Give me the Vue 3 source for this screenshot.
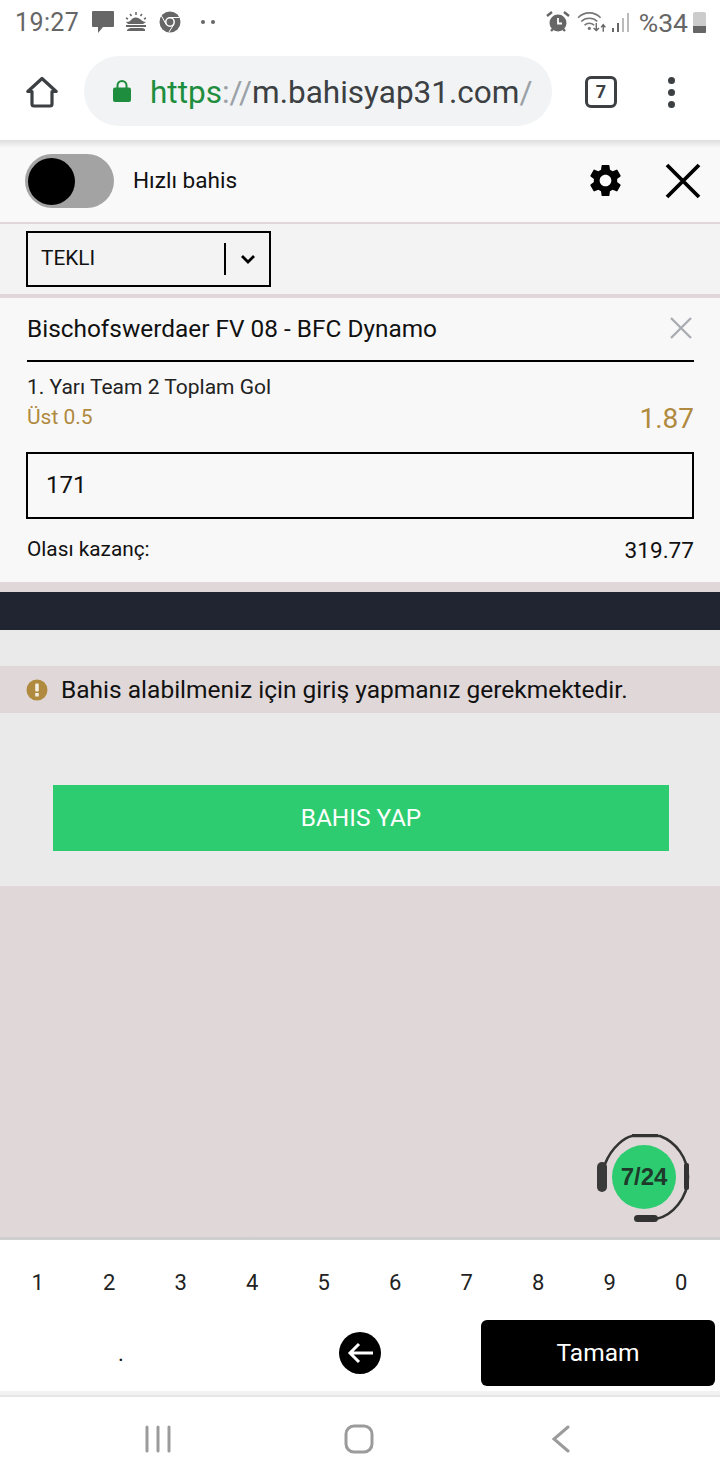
<script setup>
const digits = ['1','2','3','4','5','6','7','8','9','0']
</script>

<template>
  <div class="phone">
    <div class="status">
      <div class="status-left">
        <span class="time">19:27</span>
        <svg class="ic" width="24" height="24" viewBox="0 0 24 24"><path d="M2 1h20a1 1 0 0 1 1 1v14a1 1 0 0 1-1 1H12l-5 6v-6H2a1 1 0 0 1-1-1V2a1 1 0 0 1 1-1z" fill="#666"/></svg>
        <svg class="ic sun" width="22" height="20" viewBox="0 0 22 20"><g fill="#666"><path d="M1 10c3 0 4-1 5-2a6 6 0 0 1 9-1c2 2 4 3 6 3l-3 2H3z"/><rect x="1" y="13" width="20" height="2"/><path d="M2 18c2-2 4-2 5-2h10c2 0 3 1 3 2v1H2z"/></g><g stroke="#666" stroke-width="1.5"><path d="M11 0v3M5 2l1.500 2M17 2l-1.500 2M1 6l2 1M21 6l-2 1"/></g></svg>
        <svg class="ic chrome" width="22" height="22" viewBox="0 0 22 22"><circle cx="11" cy="11" r="10.500" fill="#666"/><circle cx="11" cy="11" r="4.200" fill="#666" stroke="#fff" stroke-width="1.500"/><path d="M11 6.500h9.500M7.100 13.300 2.500 5M14.900 13.300 10 21" stroke="#fff" stroke-width="1"/></svg>
        <span class="dots"><i></i><i></i></span>
      </div>
      <div class="status-right">
        <svg width="24" height="24" viewBox="0 0 24 24"><circle cx="12" cy="13" r="8.500" fill="#666"/><path d="M12 8v5.500h4" stroke="#fff" stroke-width="1.800" fill="none"/><path d="M1 6l5-4M23 6l-5-4M5 21l2-2M19 21l-2-2" stroke="#666" stroke-width="2.400"/></svg>
        <svg class="wifi" width="30" height="24" viewBox="0 0 28 22"><g fill="none" stroke="#777" stroke-width="1.500"><path d="M1 7c6-6 15-6 21 0"/><path d="M4 10.500c4-4 11-4 15 0"/><path d="M7 14c2.500-2.500 6.500-2.500 9 0"/></g><circle cx="11.500" cy="17" r="1.500" fill="#777"/><path d="M18 12v7m-2.500-2.500L18 19l2.500-2.500M24.500 20v-6m-2 2 2-2.500 2 2.500" stroke="#666" stroke-width="1.300" fill="none"/></svg>
        <svg class="signal" width="18" height="22" viewBox="0 0 18 22"><rect x="0" y="17" width="2" height="4" fill="#666"/><rect x="5" y="12" width="2" height="9" fill="#666"/><rect x="10" y="7" width="2" height="14" fill="#bbb"/><rect x="15" y="2" width="2" height="19" fill="#bbb"/></svg>
        <span class="pct">%34</span>
        <span class="batt"><i></i></span>
      </div>
    </div>

    <div class="toolbar">
      <svg class="home" width="36" height="36" viewBox="0 0 36 36"><path d="M18 4.500 3.800 17.500H8v12.500a2 2 0 0 0 2 2h16a2 2 0 0 0 2-2V17.500h4.200z" fill="none" stroke="#3c4043" stroke-width="3.200" stroke-linejoin="round"/></svg>
      <div class="url">
        <svg width="20" height="24" viewBox="0 0 20 24"><path d="M5.500 9V6.500a4.500 4.500 0 0 1 9 0V9" fill="none" stroke="#1e8e3e" stroke-width="2"/><rect x="1" y="8.500" width="18" height="14.500" rx="2" fill="#1e8e3e"/></svg>
        <div class="url-text"><span class="g">https</span><span class="s">://</span>m.bahisyap31.com<span class="s">/p</span></div>
      </div>
      <div class="tabs">7</div>
      <div class="more"><i></i><i></i><i></i></div>
    </div>

    <div class="quick">
      <div class="switch"><div class="knob"></div></div>
      <span class="quick-label">Hızlı bahis</span>
      <svg class="gear" width="39" height="39" viewBox="0 0 24 24"><path d="M19.140 12.940c.04-.3.060-.61.060-.94 0-.32-.020-.64-.070-.94l2.030-1.580a.49.49 0 0 0 .12-.61l-1.920-3.320a.488.488 0 0 0-.59-.22l-2.390.96c-.5-.38-1.030-.7-1.620-.94l-.36-2.540a.484.484 0 0 0-.48-.41h-3.840c-.24 0-.43.170-.47.410l-.36 2.540c-.59.240-1.130.570-1.620.94l-2.390-.96c-.22-.08-.47 0-.59.22L2.740 8.870c-.12.210-.08.470.12.610l2.030 1.580c-.05.3-.09.630-.09.940s.02.640.07.940l-2.030 1.580a.49.49 0 0 0-.12.610l1.920 3.320c.12.220.37.290.59.220l2.390-.96c.5.380 1.030.7 1.620.94l.36 2.540c.05.240.24.410.48.410h3.840c.24 0 .44-.170.47-.41l.36-2.540c.59-.24 1.130-.56 1.620-.94l2.390.96c.22.080.47 0 .59-.22l1.920-3.320c.12-.22.070-.47-.12-.61l-2.010-1.580zM12 15.600c-1.980 0-3.600-1.620-3.600-3.600s1.620-3.600 3.600-3.600 3.600 1.620 3.600 3.600-1.620 3.600-3.600 3.600z" fill="#000"/></svg>
      <svg class="close" width="36" height="36" viewBox="0 0 36 36"><path d="M2 2l32 32M34 2 2 34" stroke="#000" stroke-width="3.800"/></svg>
    </div>

    <div class="type-row">
      <div class="select">
        <span class="select-text">TEKLI</span>
        <span class="sep"></span>
        <svg width="16" height="10" viewBox="0 0 16 10"><path d="M2 2l6 6 6-6" fill="none" stroke="#000" stroke-width="2.800"/></svg>
      </div>
    </div>

    <div class="card">
      <div class="match">
        <span>Bischofswerdaer FV 08 - BFC Dynamo</span>
        <svg width="22" height="22" viewBox="0 0 22 22"><path d="M1 1l20 20M21 1 1 21" stroke="#a9adb3" stroke-width="2.400"/></svg>
      </div>
      <div class="market">1. Yarı Team 2 Toplam Gol</div>
      <div class="pick">
        <span class="pick-name">Üst 0.5</span>
        <span class="odd">1.87</span>
      </div>
      <div class="stake">171</div>
      <div class="win">
        <span class="win-label">Olası kazanç:</span>
        <span class="win-value">319.77</span>
      </div>
    </div>

    <div class="dark-wrap"><div class="dark"></div></div>

    <div class="action">
      <div class="notice">
        <svg width="22" height="22" viewBox="0 0 22 22"><circle cx="11" cy="11" r="10.500" fill="#b08a3e"/><rect x="9.200" y="4.500" width="3.600" height="8" rx="1" fill="#f4eee0"/><rect x="9.200" y="14" width="3.600" height="3.500" fill="#f4eee0"/></svg>
        <span>Bahis alabilmeniz için giriş yapmanız gerekmektedir.</span>
      </div>
      <div class="btn-wrap"><div class="btn">BAHIS YAP</div></div>
    </div>

    <div class="empty">
      <div class="support">
        <svg width="100" height="92" viewBox="0 0 100 92">
          <path d="M11 32C18 14 32 5 38 4H66C82 10 94 26 94 45C94 66 78 84 62 87L46 88" fill="none" stroke="#333" stroke-width="2.600"/>
          <path d="M38 2h26v3H38z" fill="#333"/>
          <rect x="3" y="30" width="10" height="30" rx="5" fill="#3a3a3a"/>
          <rect x="90" y="31" width="5" height="27" rx="2" fill="#333"/>
          <rect x="40" y="83" width="24" height="7" rx="3.500" fill="#333"/>
          <circle cx="50" cy="45" r="32" fill="#2ecc71"/>
          <text x="50" y="53" text-anchor="middle" class="support-text">7/24</text>
        </svg>
      </div>
    </div>

    <div class="keyboard">
      <div class="digits"><span v-for="d in digits" :key="d">{{ d }}</span></div>
      <div class="keys">
        <span class="dot-key">.</span>
        <svg class="back" width="42" height="42" viewBox="0 0 42 42"><circle cx="21" cy="21" r="21" fill="#000"/><path d="M34 21H11M20 12l-9 9 9 9" fill="none" stroke="#fff" stroke-width="3"/></svg>
        <div class="ok">Tamam</div>
      </div>
    </div>

    <div class="nav">
      <svg class="nav-recent" width="28" height="28" viewBox="0 0 28 28"><path d="M3 2v24M14 2v24M25 2v24" stroke="#9b9b9b" stroke-width="3" stroke-linecap="round"/></svg>
      <svg class="nav-home" width="30" height="30" viewBox="0 0 30 30"><rect x="2" y="2" width="26" height="26" rx="8" fill="none" stroke="#9b9b9b" stroke-width="3"/></svg>
      <svg width="20" height="28" viewBox="0 0 20 28"><path d="M17 2 3 14l14 12" fill="none" stroke="#9b9b9b" stroke-width="3" stroke-linecap="round"/></svg>
    </div>
  </div>
</template>

<style>
html, body { margin: 0; background: #fff; }
</style>

<style scoped>
.phone {
  width: 720px;
  height: 1480px;
  overflow: hidden;
  display: flex;
  flex-direction: column;
  font-family: Roboto, "Liberation Sans", sans-serif;
  color: #111;
  background: #fff;
}
.status {
  height: 46px;
  display: flex;
  justify-content: space-between;
  align-items: center;
  padding: 0 14px 2px 15px;
  box-sizing: border-box;
  flex: none;
}
.status-left, .status-right { display: flex; align-items: center; }
.time { font-size: 25px; color: #666; letter-spacing: 0.4px; margin-right: 12px; }
.sun { margin-left: 10px; }
.chrome { margin-left: 12px; }
.dots { display: flex; gap: 6px; margin-left: 20px; }
.dots i { width: 4px; height: 4px; border-radius: 50%; background: #666; }
.wifi { margin-left: 7px; }
.signal { margin-left: 5px; margin-right: 9px; }
.pct { font-size: 26.500px; color: #666; margin-right: 5px; }
.batt {
  width: 13px;
  height: 21px;
  background: #ccc;
  border-radius: 2px 2px 1px 1px;
  position: relative;
  overflow: hidden;
}
.batt i { position: absolute; left: 0; right: 0; bottom: 0; height: 7px; background: #666; }
.toolbar {
  height: 94px;
  display: flex;
  align-items: center;
  flex: none;
  padding: 0 0 4px 24px;
  box-sizing: border-box;
}
.home { flex: none; margin-top: 2px; }
.url {
  width: 468px;
  height: 70px;
  margin-left: 24px;
  border-radius: 35px;
  background: #f1f3f4;
  display: flex;
  align-items: center;
  padding-left: 28px;
  box-sizing: border-box;
  flex: none;
}
.url-text {
  width: 384px;
  margin-left: 18px;
  padding-top: 2px;
  font-size: 31.500px;
  white-space: nowrap;
  overflow: hidden;
  color: #3c4043;
}
.g { color: #1e8e3e; }
.s { color: #9aa0a6; }
.tabs {
  width: 26px;
  height: 26px;
  margin-left: 33px;
  margin-top: 2px;
  border: 3px solid #3c4043;
  border-radius: 6px;
  font-size: 18px;
  font-weight: 700;
  line-height: 26px;
  text-align: center;
  color: #3c4043;
  flex: none;
}
.more { display: flex; flex-direction: column; gap: 5px; margin-left: 51px; margin-top: 3px; }
.more i { width: 7px; height: 7px; border-radius: 50%; background: #3c4043; }
.quick {
  height: 84px;
  flex: none;
  box-sizing: border-box;
  border-bottom: 2px solid #e0d8d8;
  background: linear-gradient(#dedede, #f9f9f9 8px);
  display: flex;
  align-items: center;
  padding: 0 19px 0 25px;
}
.switch {
  width: 89px;
  height: 54px;
  border-radius: 27px;
  background: #a3a3a3;
  flex: none;
  display: flex;
  align-items: center;
  padding-left: 3px;
  box-sizing: border-box;
}
.knob { width: 47px; height: 47px; border-radius: 50%; background: #000; }
.quick-label { font-size: 22.600px; margin-left: 19px; flex: 1; color: #111; padding-bottom: 2px; }
.gear { margin-right: 40px; margin-top: -2px; }
.type-row {
  height: 70px;
  flex: none;
  background: #f3f3f3;
  padding: 7px 0 0 26px;
  box-sizing: border-box;
  border-bottom: 0;
}
.select {
  width: 245px;
  height: 56px;
  border: 2px solid #000;
  box-sizing: border-box;
  display: flex;
  align-items: center;
  padding: 0 13px 0 13px;
}
.select-text { font-size: 20.800px; flex: 1; padding-bottom: 2px; }
.sep { width: 2px; height: 32px; background: #000; margin-right: 14px; }
.card {
  margin-top: 0;
  height: 288px;
  flex: none;
  background: #f8f8f8;
  border-top: 4px solid #e0d8d8;
  box-sizing: border-box;
  padding: 0 26px 0 27px;
}
.match {
  height: 64px;
  border-bottom: 2px solid #000;
  box-sizing: border-box;
  display: flex;
  justify-content: space-between;
  align-items: center;
  font-size: 24.400px;
  padding: 0 2px 2px 0;
}
.market { font-size: 21px; margin-top: 13px; line-height: 24px; color: #222; }
.pick { display: flex; justify-content: space-between; align-items: flex-end; height: 36px; }
.pick-name { font-size: 21px; color: #b08a3e; line-height: 24px; padding-bottom: 6px; }
.odd { font-size: 28px; color: #b08a3e; line-height: 32px; }
.stake {
  margin: 17px 0 0 -1px;
  height: 67px;
  border: 2px solid #000;
  box-sizing: border-box;
  font-size: 24px;
  line-height: 63px;
  padding-left: 18px;
}
.win { display: flex; justify-content: space-between; align-items: center; margin-top: 14px; }
.win-label { font-size: 20.800px; }
.win-value { font-size: 22.600px; margin-top: 4px; }
.dark-wrap {
  height: 48px;
  flex: none;
  background: #e0d8d8;
  padding-top: 10px;
  box-sizing: border-box;
}
.dark { height: 38px; background: #212532; }
.action {
  flex: none;
  height: 256px;
  background: #eaeaea;
  padding-top: 36px;
  box-sizing: border-box;
}
.notice {
  height: 47px;
  background: #e0d8d8;
  display: flex;
  align-items: center;
  padding-left: 26px;
  font-size: 24.500px;
}
.notice span { margin-left: 13px; color: #111; }
.btn-wrap { padding: 72px 51px 0 53px; }
.btn {
  height: 66px;
  background: #2ecc71;
  color: #fff;
  font-size: 24.400px;
  line-height: 66px;
  text-align: center;
}
.empty {
  height: 354px;
  flex: none;
  background: #e0d8d8;
  position: relative;
  border-bottom: 3px solid;
  border-image: linear-gradient(#b8b2b2, #66666a, #cfcfcf) 3;
  box-sizing: border-box;
}
.support { position: absolute; left: 594px; top: 246px; }
.support-text { font: 700 24px "Liberation Sans", sans-serif; fill: #1e3a2b; }
.keyboard {
  height: 151px;
  flex: none;
  background: #fff;
}
.digits {
  display: grid;
  grid-template-columns: repeat(10, 1fr);
  padding: 28px 3px 0 2px;
  font-size: 22px;
  line-height: 30px;
  text-align: center;
  color: #222;
}
.keys {
  height: 66px;
  margin-top: 22px;
  display: flex;
  align-items: center;
  padding-left: 118px;
  font-size: 22px;
}
.dot-key { width: 221px; flex: none; }
.back { flex: none; margin-left: 0; }
.ok {
  width: 234px;
  height: 66px;
  margin-left: 100px;
  background: #000;
  border-radius: 6px;
  color: #fff;
  font-size: 24.500px;
  line-height: 66px;
  text-align: center;
  flex: none;
}
.nav {
  flex: 1;
  background: #fff;
  border-top: 6px solid;
  border-image: linear-gradient(#f2f2f2 0 4px, #e6e6e6 4px) 6;
  display: flex;
  align-items: center;
  padding: 0 0 0 144px;
  box-sizing: border-box;
}
.nav-recent { margin-right: 172px; }
.nav-home { margin-right: 177px; }
</style>
